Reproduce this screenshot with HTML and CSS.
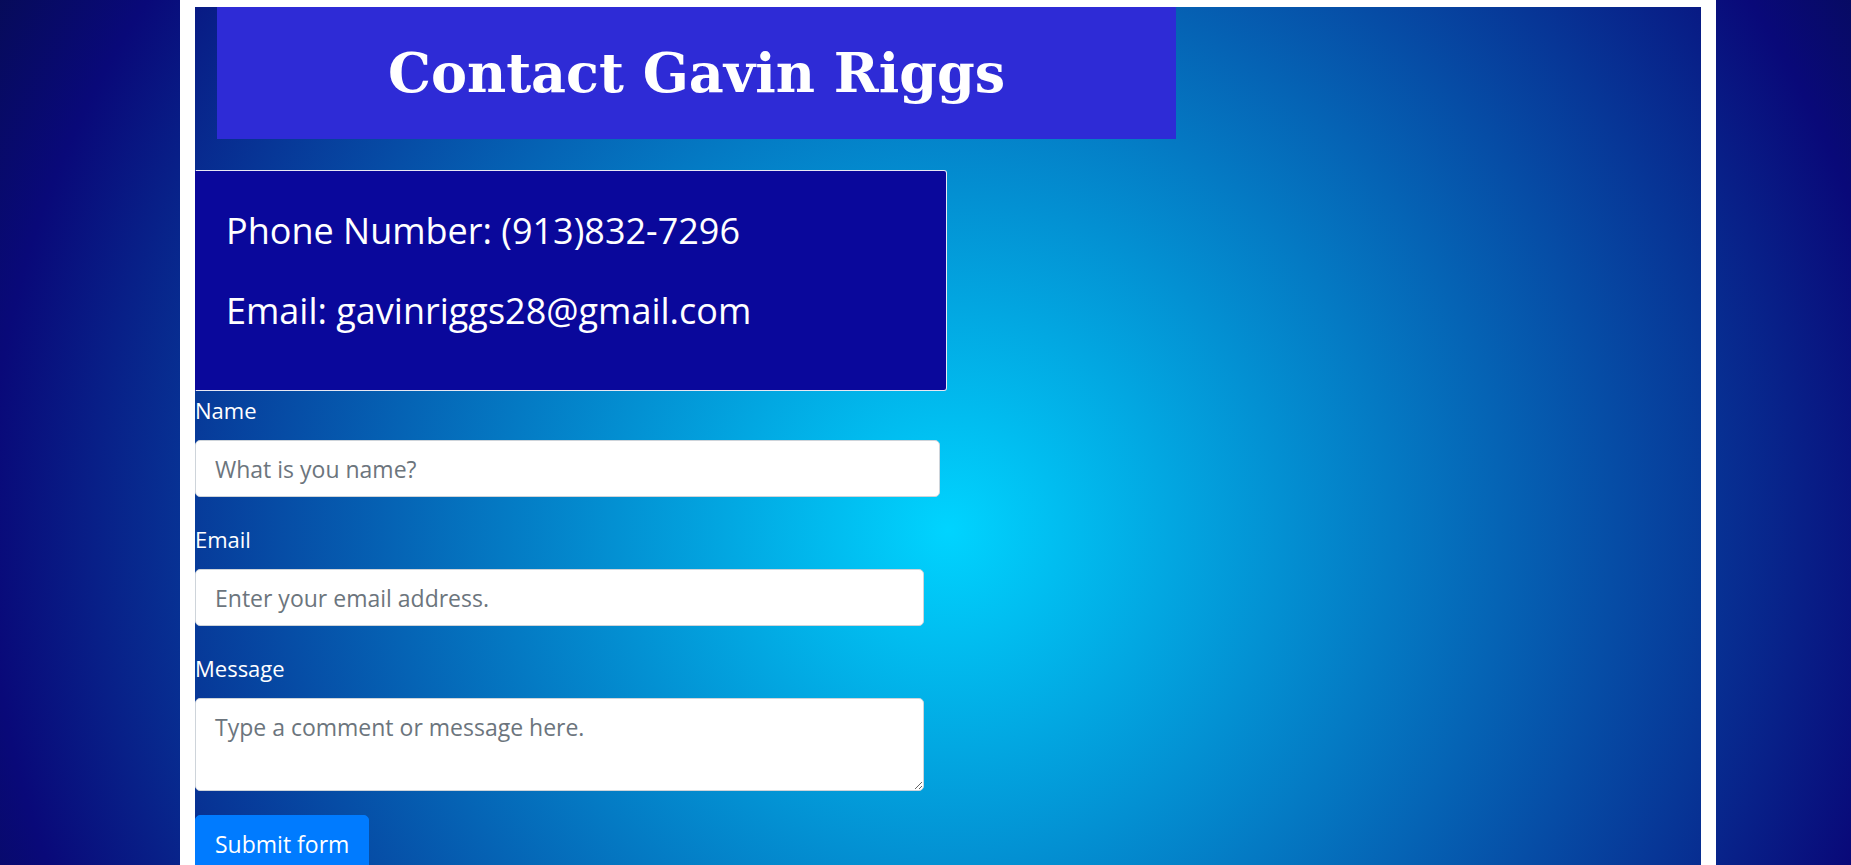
FILE: index.html
```html
<!DOCTYPE html>
<html lang="en">
<head>
<meta charset="utf-8">
<title>Contact Gavin Riggs</title>
<link rel="stylesheet" href="styles.css">
</head>
<body class="page">
  <main class="frame">
    <header class="title-bar">
      <h1 class="title">Contact Gavin Riggs</h1>
    </header>
    <section class="info">
      <p class="info-line">Phone Number: (913)832-7296</p>
      <p class="info-line">Email: gavinriggs28@gmail.com</p>
    </section>
    <form class="contact-form">
      <div class="field">
        <label class="field-label" for="name">Name</label>
        <input class="control control-name" id="name" type="text" placeholder="What is you name?">
      </div>
      <div class="field">
        <label class="field-label" for="email">Email</label>
        <input class="control control-email" id="email" type="email" placeholder="Enter your email address.">
      </div>
      <div class="field field-last">
        <label class="field-label" for="msg">Message</label>
        <textarea class="control control-msg" id="msg" placeholder="Type a comment or message here."></textarea>
      </div>
      <button class="submit" type="button">Submit form</button>
    </form>
  </main>
</body>
</html>
```

FILE: styles.css
```css
* { box-sizing: border-box; }

html, body {
  margin: 0;
  height: 865px;
  overflow: hidden;
}

.page {
  font-family: "Open Sans", "Noto Sans", sans-serif;
  color: #fff;
  background: radial-gradient(circle at 948px 530px, #00d4ff 0px, #090979 960px, #050c48 1160px);
}

.frame {
  margin-left: 180px;
  width: 1536px;
  height: 900px;
  border-style: solid;
  border-color: #fff;
  border-width: 7px 15px 0 15px;
  background: radial-gradient(circle 1000px at 50% 530px, #00d4ff 0%, #090979 100%);
  background-origin: border-box;
}

.title-bar {
  margin-left: 22px;
  width: 959px;
  height: 132px;
  padding-top: 34px;
  background: #2e2bd6;
  text-align: center;
}

.title {
  margin: 0;
  font-family: "DejaVu Serif", Georgia, serif;
  font-weight: 700;
  font-size: 54px;
  line-height: 1.2;
}

.info {
  margin-top: 31px;
  width: 752px;
  height: 221px;
  padding: 33px 30px 0 30px;
  background: #0a089b;
  border: 1px solid #e8e8f4;
  border-left-color: #0a089b;
  border-radius: 0 3px 3px 0;
}

.info-line {
  margin: 0 0 26px 0;
  font-size: 36px;
  line-height: 54px;
}

.contact-form {
  padding-top: 4px;
}

.field {
  margin-bottom: 27px;
}

.field-last {
  margin-bottom: 24px;
}

.field-label {
  display: block;
  font-size: 22px;
  line-height: 31.5px;
  margin-bottom: 13.5px;
}

.control {
  display: block;
  font-family: inherit;
  font-size: 23px;
  line-height: 33px;
  color: #495057;
  background: #fff;
  border: 1px solid #ced4da;
  border-radius: 5px;
  padding: 11px 19px;
  height: 57px;
}

.control::placeholder {
  color: #6c757d;
  opacity: 1;
}

.control-name { width: 745px; }
.control-email { width: 729px; }

.control-msg {
  width: 729px;
  height: 93px;
  padding-top: 12px;
  resize: vertical;
}

.submit {
  display: inline-block;
  font-family: inherit;
  font-size: 23px;
  line-height: 33px;
  white-space: nowrap;
  color: #fff;
  background: #007bff;
  border: 1px solid #007bff;
  border-radius: 5px;
  padding: 12px 19px;
}
```
